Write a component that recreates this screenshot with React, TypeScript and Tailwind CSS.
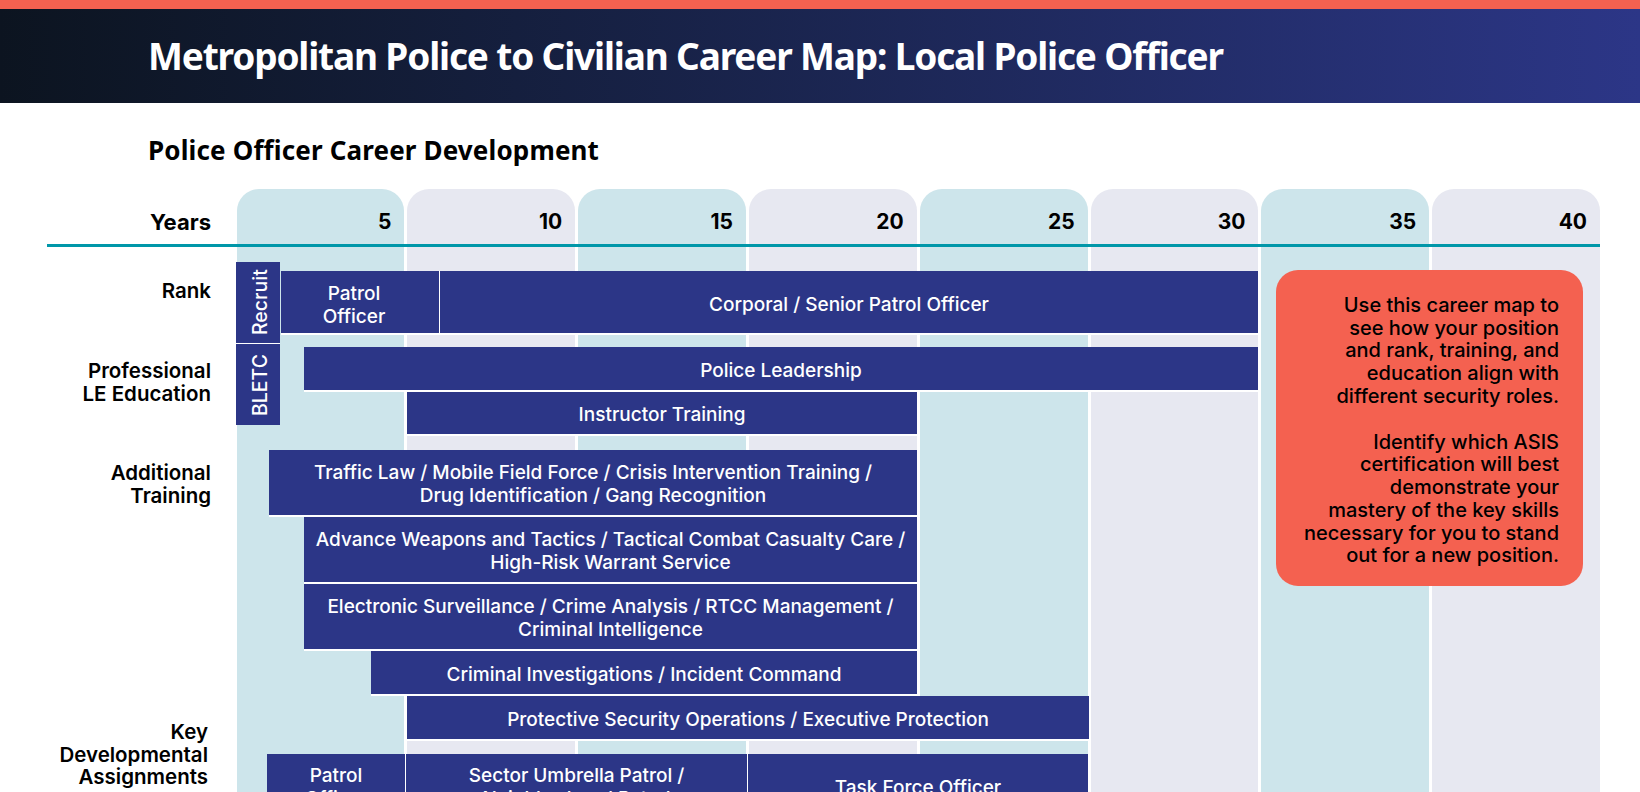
import React from "react";

const body = "font-['Inter',sans-serif]";
const head = "font-['Noto_Sans',sans-serif]";

const years = [5, 10, 15, 20, 25, 30, 35, 40];

const Bar = ({ className, children }: { className: string; children: React.ReactNode }) => (
  <div
    className={`flex items-center justify-center bg-[#2c3687] text-center text-white text-[19px] leading-[23px] font-medium border-b-[2px] border-white ${className}`}
  >
    <div className="mt-[3px]">{children}</div>
  </div>
);

export default function App() {
  return (
    <div className={`h-[792px] overflow-hidden bg-white ${body}`}>
      <div className="h-[9px] bg-[#f46150]" />
      <div className="flex h-[94px] items-center bg-gradient-to-r from-[#0c1420] to-[#2c3687] pl-[148px]">
        <h1 className={`text-[37px] font-bold tracking-[-1.16px] text-white ${head}`}>
          Metropolitan Police to Civilian Career Map: Local Police Officer
        </h1>
      </div>
      <h2 className={`ml-[148px] mt-[28px] h-[40px] text-[26px] leading-[38px] font-bold tracking-[0.15px] text-black ${head}`}>
        Police Officer Career Development
      </h2>

      <div className="relative mt-[18px] flex h-[603px]">
        {/* year columns */}
        <div className="absolute left-[236.5px] top-0 bottom-0 grid w-[1363.5px] grid-cols-8 gap-[3px]">
          {years.map((y, i) => (
            <div
              key={y}
              className={`rounded-t-[22px] pr-[13px] pt-[21px] text-right text-[21px] leading-[24px] font-bold text-black ${
                i % 2 === 0 ? "bg-[#cde5eb]" : "bg-[#e7e8f1]"
              }`}
            >
              {y}
            </div>
          ))}
        </div>
        <div className="absolute left-[47px] top-[55px] h-[3px] w-[1553px] bg-[#0097a9]" />

        {/* row labels */}
        <div className="relative w-[236px] shrink-0 pr-[25px] text-right text-[20.5px] leading-[23px] font-semibold text-black">
          <div className="pt-[21px] text-[22px] leading-[24px] font-bold">Years</div>
          <div className="mt-[45px]">Rank</div>
          <div className="mt-[57px]">
            Professional
            <br />
            LE Education
          </div>
          <div className="mt-[56px]">
            Additional
            <br />
            Training
          </div>
          <div className="mt-[214px] pr-[3px] leading-[22.6px]">
            Key
            <br />
            Developmental
            <br />
            Assignments
          </div>
        </div>

        {/* bars */}
        <div className="relative w-[1364px] pt-[73px]">
          <div className="flex items-start">
            <div className="w-[44px] shrink-0">
              <div className="flex h-[82px] w-[44px] items-center justify-center border-t border-white bg-[#2c3687] pr-[5px] text-[19.5px] font-medium text-white [writing-mode:vertical-rl] rotate-180">
                Recruit
              </div>
              <div className="flex h-[81px] w-[44px] items-center justify-center bg-[#2c3687] pr-[5px] text-[19.5px] font-medium text-white [writing-mode:vertical-rl] rotate-180">
                BLETC
              </div>
            </div>
            <div className="ml-[1px] w-[977px] pt-[9px]">
              <div className="flex">
                <Bar className="h-[64px] w-[159px] border-r border-r-white pr-[12px] pt-[2px]">
                  Patrol
                  <br />
                  Officer
                </Bar>
                <Bar className="h-[64px] w-[818px] pt-[2px]">Corporal / Senior Patrol Officer</Bar>
              </div>
              <Bar className="ml-[23px] mt-[12px] h-[45px] w-[954px]">Police Leadership</Bar>
              <Bar className="ml-[126px] h-[44px] w-[510px]">Instructor Training</Bar>
            </div>
          </div>
          <Bar className="ml-[33px] mt-[14px] h-[67px] w-[648px]">
            Traffic Law / Mobile Field Force / Crisis Intervention Training /
            <br />
            Drug Identification / Gang Recognition
          </Bar>
          <Bar className="ml-[68px] h-[67px] w-[613px]">
            Advance Weapons and Tactics / Tactical Combat Casualty Care /
            <br />
            High-Risk Warrant Service
          </Bar>
          <Bar className="ml-[68px] h-[67px] w-[613px]">
            Electronic Surveillance / Crime Analysis / RTCC Management /
            <br />
            Criminal Intelligence
          </Bar>
          <Bar className="ml-[135px] h-[45px] w-[546px]">Criminal Investigations / Incident Command</Bar>
          <Bar className="ml-[171px] h-[45px] w-[682px]">Protective Security Operations / Executive Protection</Bar>
          <div className="ml-[31px] mt-[13px] flex items-start">
            <Bar className="h-[70px] w-[139px] items-start border-r border-r-white pt-[7px]">
              Patrol
              <br />
              Officer
            </Bar>
            <Bar className="h-[70px] w-[342px] items-start border-r border-r-white pt-[7px]">
              Sector Umbrella Patrol /
              <br />
              Neighborhood Patrol
            </Bar>
            <Bar className="h-[65px] w-[340px]">Task Force Officer</Bar>
          </div>

          {/* callout */}
          <div className="absolute left-[1040px] top-[81px] flex h-[316px] w-[307px] flex-col justify-center rounded-[22px] bg-[#f46150] pr-[24px] pt-[5px] text-right text-[20px] leading-[22.8px] font-medium text-black">
            <p>
              Use this career map to
              <br />
              see how your position
              <br />
              and rank, training, and
              <br />
              education align with
              <br />
              different security roles.
            </p>
            <p className="mt-[22.8px]">
              Identify which ASIS
              <br />
              certification will best
              <br />
              demonstrate your
              <br />
              mastery of the key skills
              <br />
              necessary for you to stand
              <br />
              out for a new position.
            </p>
          </div>
        </div>
      </div>
    </div>
  );
}
